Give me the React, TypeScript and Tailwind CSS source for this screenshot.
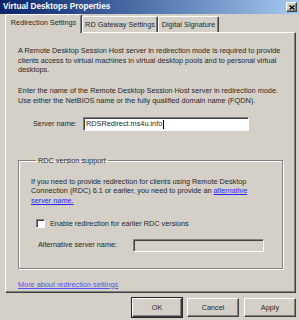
import React from 'react';

const raised =
  'border border-t-white border-l-white border-r-[#404040] border-b-[#404040] shadow-[inset_-1px_-1px_0_#808080]';
const sunken =
  'border border-t-[#808080] border-l-[#808080] border-r-white border-b-white shadow-[inset_1px_1px_0_#404040]';

const Tab = ({ label, width, active }: { label: string; width: string; active?: boolean }) => (
  <div
    className={`${width} flex items-center justify-center border-l border-t border-r border-l-white border-t-white border-r-[#404040] shadow-[inset_-1px_0_0_#808080] rounded-t-[2px] bg-[#d4d0c8] ${
      active ? 'h-[19px] relative z-10 -mb-px' : 'h-[16px]'
    }`}
  >
    <span className={active ? 'pb-[2px]' : ''}>{label}</span>
  </div>
);

const Button = ({ label, width, def }: { label: string; width: string; def?: boolean }) => (
  <button
    className={`${width} h-[19px] bg-[#d4d0c8] ${def ? 'outline outline-1 outline-[#222]' : ''} ${raised} flex items-center justify-center`}
  >
    {label}
  </button>
);

export default function App() {
  return (
    <div className="w-[299px] h-[320px] bg-[#d4d0c8] overflow-hidden font-['Liberation_Sans',sans-serif] text-[7.3px] leading-[9.5px] text-[#262626]">
      {/* title bar */}
      <div className="h-[14px] flex items-center pl-[3px] pr-[2px] bg-linear-to-r from-[#0a246a] to-[#a6caf0]">
        <span className="text-white font-bold text-[8.2px]">Virtual Desktops Properties</span>
        <div className={`ml-auto w-[11px] h-[10px] bg-[#d4d0c8] ${raised} flex items-center justify-center`}>
          <svg width="6" height="5" viewBox="0 0 6 5">
            <path d="M0.5 0.5 L5.5 4.5 M5.5 0.5 L0.5 4.5" stroke="#000" strokeWidth="1.3" />
          </svg>
        </div>
      </div>

      {/* tabs */}
      <div className="flex items-end pl-[5px] h-[18px]">
        <Tab label="Redirection Settings" width="w-[77px]" active />
        <Tab label="RD Gateway Settings" width="w-[76px]" />
        <Tab label="Digital Signature" width="w-[61px]" />
      </div>

      {/* panel */}
      <div className={`ml-[5px] w-[291px] h-[261px] ${raised} pl-[12px] pt-[13px]`}>
        <p className="whitespace-nowrap">
          A Remote Desktop Session Host server in redirection mode is required to provide
          <br />
          clients access to virtual machines in virtual desktop pools and to personal virtual
          <br />
          desktops.
        </p>
        <p className="whitespace-nowrap mt-[11.5px]">
          Enter the name of the Remote Desktop Session Host server in redirection mode.
          <br />
          Use either the NetBIOS name or the fully qualified domain name (FQDN).
        </p>

        <div className="flex items-center mt-[12px] h-[14px]">
          <span className="w-[65px] pl-[15px]">Server name:</span>
          <div className={`w-[166px] h-[14px] bg-white ${sunken} flex items-center pl-[2px]`}>
            <span>RDSRedirect.ms4u.info</span>
            <span className="w-px h-[9px] bg-black ml-px" />
          </div>
        </div>

        <fieldset className="mt-[25px] w-[265px] border border-[#808080] shadow-[1px_1px_0_white,inset_1px_1px_0_white] pl-[12px] pb-[16px]">
          <legend className="ml-[5px] px-[2px]">RDC version support</legend>
          <p className="whitespace-nowrap mt-[11px]">
            If you need to provide redirection for clients using Remote Desktop
            <br />
            Connection (RDC) 6.1 or earlier, you need to provide an{' '}
            <span className="text-[#2525ff] underline">alternative</span>
            <br />
            <span className="text-[#2525ff] underline">server name.</span>
          </p>

          <div className="flex items-center mt-[14px] pl-[5px]">
            <div className={`w-[9px] h-[9px] bg-white ${sunken}`} />
            <span className="ml-[5px]">Enable redirection for earlier RDC versions</span>
          </div>

          <div className="flex items-center mt-[10px] h-[13px]">
            <span className="w-[102px] pl-[7px]">Alternative server name:</span>
            <div className={`w-[131px] h-[13px] bg-[#d4d0c8] ${sunken}`} />
          </div>
        </fieldset>

        <p className="mt-[11px] text-[#5a50f0] underline">More about redirection settings</p>
      </div>

      {/* buttons */}
      <div className="flex justify-end gap-[5px] pr-[3px] mt-[5px]">
        <Button label="OK" width="w-[50px]" def />
        <Button label="Cancel" width="w-[52px]" />
        <Button label="Apply" width="w-[52px]" />
      </div>
    </div>
  );
}
